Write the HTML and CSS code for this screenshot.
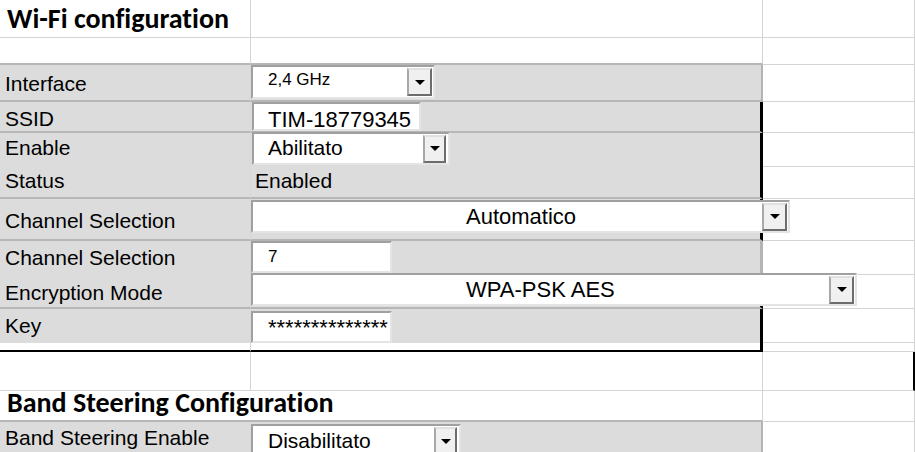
FILE: index.html
```html
<!DOCTYPE html>
<html lang="it">
<head>
<meta charset="utf-8">
<title>Wi-Fi configuration</title>
<link rel="stylesheet" href="styles.css">
</head>
<body>
<div class="sheet">
  <div class="row r1">
    <div class="cell a"><div class="heading h-wifi">Wi-Fi configuration</div></div>
    <div class="cell b"></div>
    <div class="cell c"></div>
  </div>
  <div class="row r2 pre-gray">
    <div class="cell a"></div>
    <div class="cell b"></div>
    <div class="cell c"></div>
  </div>
  <div class="row r3 gray">
    <div class="cell a"><div class="label">Interface</div></div>
    <div class="cell b">
      <div class="field combo combo-iface">
        <span class="val small">2,4 GHz</span>
        <span class="btn"></span>
      </div>
    </div>
    <div class="cell c"></div>
  </div>
  <div class="row r4 gray boxed">
    <div class="cell a"><div class="label">SSID</div></div>
    <div class="cell b">
      <div class="field text-ssid"><span class="val big">TIM-18779345</span></div>
    </div>
    <div class="cell c"></div>
  </div>
  <div class="row r5 gray boxed">
    <div class="cell a"><div class="label">Enable</div></div>
    <div class="cell b">
      <div class="field combo combo-enable">
        <span class="val">Abilitato</span>
        <span class="btn btn-narrow"></span>
      </div>
    </div>
    <div class="cell c"></div>
  </div>
  <div class="row r6 gray boxed">
    <div class="cell a"><div class="label">Status</div></div>
    <div class="cell b"><div class="label status">Enabled</div></div>
    <div class="cell c"></div>
  </div>
  <div class="row r7 gray boxed">
    <div class="cell a"><div class="label">Channel Selection</div></div>
    <div class="cell b">
      <div class="field combo combo-channel">
        <span class="val big wide">Automatico</span>
        <span class="btn"></span>
      </div>
    </div>
    <div class="cell c"></div>
  </div>
  <div class="row r8 gray soft">
    <div class="cell a"><div class="label">Channel Selection</div></div>
    <div class="cell b">
      <div class="field text-num"><span class="val small">7</span></div>
    </div>
    <div class="cell c"></div>
  </div>
  <div class="row r9 gray boxed">
    <div class="cell a"><div class="label">Encryption Mode</div></div>
    <div class="cell b">
      <div class="field combo combo-enc">
        <span class="val big wide">WPA-PSK AES</span>
        <span class="btn"></span>
      </div>
    </div>
    <div class="cell c"></div>
  </div>
  <div class="row r10 gray boxed last">
    <div class="cell a"><div class="label">Key</div></div>
    <div class="cell b">
      <div class="field text-key"><span class="val big">**************</span></div>
    </div>
    <div class="cell c"></div>
  </div>
  <div class="row r11 closing">
    <div class="cell a"></div>
    <div class="cell b"></div>
    <div class="cell c"></div>
  </div>
  <div class="row r12">
    <div class="cell a"></div>
    <div class="cell b"></div>
    <div class="cell c edge"></div>
  </div>
  <div class="row r13 pre-gray">
    <div class="cell a overflow"><div class="heading h-band">Band Steering Configuration</div></div>
    <div class="cell b"></div>
    <div class="cell c"></div>
  </div>
  <div class="row r14 gray">
    <div class="cell a"><div class="label">Band Steering Enable</div></div>
    <div class="cell b">
      <div class="field combo combo-band">
        <span class="val">Disabilitato</span>
        <span class="btn btn-narrow"></span>
      </div>
    </div>
    <div class="cell c"></div>
  </div>
</div>
</body>
</html>
```

FILE: styles.css
```css
* { box-sizing: border-box; }

body {
  margin: 0;
  background: #ffffff;
  color: #000000;
  font-family: "Liberation Sans", Arial, sans-serif;
  overflow: hidden;
}

.sheet { width: 915px; }

.row {
  display: grid;
  grid-template-columns: 251px 512px 152px;
}

.cell {
  border-right: 1px solid #d4d4d4;
  border-bottom: 1px solid #d4d4d4;
  min-width: 0;
  white-space: nowrap;
}

/* row heights */
.r1 { height: 38px; }
.r2 { height: 27px; }
.r3 { height: 37px; }
.r4 { height: 31px; }
.r5 { height: 32px; }
.r6 { height: 34px; }
.r7 { height: 42px; }
.r8 { height: 32px; }
.r9 { height: 36px; }
.r10 { height: 32px; }
.r11 { height: 11px; }
.r12 { height: 39px; }
.r13 { height: 31px; }
.r14 { height: 40px; }

/* shaded block */
.pre-gray .a, .pre-gray .b { border-bottom: 2px solid #b6b6b6; }
.gray .a, .gray .b {
  background: #dcdcdc;
  border-bottom: 2px solid #b6b6b6;
}
.gray .a { border-right-color: #d8d8d8; }
.gray .b { border-right: 2px solid #b4b4b4; }
.boxed .b { border-right: 3px solid #000000; }
.soft .b { border-right: 3px solid #b4b4b4; }
.last .a, .last .b { border-bottom: 0; }
.closing .b { border-right: 3px solid #000000; }
.closing .a, .closing .b { border-bottom: 2px solid #000000; }
.edge { border-right: 2px solid #000000; }
.overflow { border-right: 0; }

/* headings */
.heading {
  font-family: Carlito, Lato, "Open Sans", sans-serif;
  font-weight: 700;
  font-size: 28px;
  line-height: 22px;
  padding-left: 7px;
  font-variant-ligatures: none;
}
.h-wifi { padding-top: 8px; }
.h-band { padding-top: 1px; }

/* labels */
.label {
  font-size: 21px;
  line-height: 24px;
  padding-left: 5px;
}
.r3 .label { padding-top: 7px; }
.r4 .label { padding-top: 5px; }
.r5 .label { padding-top: 3px; }
.r6 .label { padding-top: 4px; }
.r7 .label { padding-top: 10px; }
.r8 .label { padding-top: 5px; }
.r9 .label { padding-top: 8px; }
.r10 .label { padding-top: 5px; }
.r14 .label { padding-top: 4px; }
.label.status { padding-left: 4px; }

/* form fields */
.field {
  background: #ffffff;
  border: 2px solid;
  border-color: #a0a0a0 #e4e4e4 #e4e4e4 #a0a0a0;
  overflow: visible;
}
.combo {
  display: flex;
  align-items: flex-start;
  justify-content: space-between;
}
.val {
  display: block;
  font-size: 21px;
  line-height: 25px;
  padding-left: 15px;
}
.val.big { font-size: 22px; }
.val.small { font-size: 17px; line-height: 20px; }
.val.wide { padding-left: 213px; }

.btn {
  flex: none;
  align-self: center;
  width: 25px;
  height: 28px;
  margin-right: 1px;
  background: #f0f0f0;
  border: 2px solid;
  border-color: #e0e0e0 #6d6d6d #6d6d6d #a8a8a8;
  display: flex;
  align-items: center;
  justify-content: center;
}
.btn::after {
  content: "";
  border-left: 5px solid transparent;
  border-right: 5px solid transparent;
  border-top: 5px solid #000000;
}
.btn-narrow { width: 23px; margin-right: 2px; }

.combo-iface { width: 184px; height: 34px; }
.combo-iface .val { padding-top: 3px; }

.text-ssid { width: 169px; height: 29px; margin-left: 1px; }
.text-ssid .val { padding-top: 3px; padding-left: 14px; }

.combo-enable { width: 198px; height: 33px; margin-left: 1px; margin-top: -1px; }
.combo-enable .val { padding-top: 1px; padding-left: 14px; }

.combo-channel { width: 539px; height: 33px; margin-top: 1px; }
.combo-channel .val { padding-top: 2px; }

.text-num { width: 141px; height: 32px; }
.text-num .val { padding-top: 4px; }

.combo-enc { width: 606px; height: 33px; }
.combo-enc .val { padding-top: 2px; }

.text-key { width: 141px; height: 32px; margin-top: 2px; }
.text-key .val { padding-top: 2px; }

.combo-band { width: 210px; height: 34px; margin-top: 2px; }
.combo-band .val { padding-top: 2px; }
```
